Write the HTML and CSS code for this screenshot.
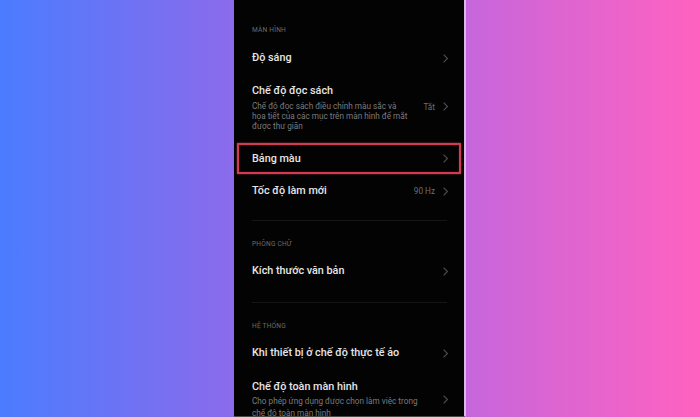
FILE: index.html
```html
<!DOCTYPE html>
<html lang="vi">
<head>
<meta charset="utf-8">
<title>Màn hình</title>
<link rel="stylesheet" href="styles.css">
</head>
<body>
<div class="stage">
  <div class="phone">
    <div class="section-title first">MÀN HÌNH</div>
    <div class="row h40">
      <div class="label">Độ sáng</div>
      <svg class="chev" viewBox="0 0 5 9"><polyline points="0.6,0.6 4.4,4.5 0.6,8.4"/></svg>
    </div>
    <div class="row tall">
      <div class="text">
        <div class="label">Chế độ đọc sách</div>
        <div class="sub">Chế độ đọc sách điều chỉnh màu sắc và họa tiết của các mục trên màn hình để mắt được thư giãn</div>
      </div>
      <div class="value">Tắt</div>
      <svg class="chev" viewBox="0 0 5 9"><polyline points="0.6,0.6 4.4,4.5 0.6,8.4"/></svg>
    </div>
    <div class="row h31 highlight">
      <div class="label">Bảng màu</div>
      <svg class="chev" viewBox="0 0 5 9"><polyline points="0.6,0.6 4.4,4.5 0.6,8.4"/></svg>
    </div>
    <div class="row h34">
      <div class="label">Tốc độ làm mới</div>
      <div class="value">90 Hz</div>
      <svg class="chev" viewBox="0 0 5 9"><polyline points="0.6,0.6 4.4,4.5 0.6,8.4"/></svg>
    </div>
    <div class="divider"></div>
    <div class="section-title">PHÔNG CHỮ</div>
    <div class="row h38">
      <div class="label">Kích thước văn bản</div>
      <svg class="chev" viewBox="0 0 5 9"><polyline points="0.6,0.6 4.4,4.5 0.6,8.4"/></svg>
    </div>
    <div class="divider"></div>
    <div class="section-title">HỆ THỐNG</div>
    <div class="row h38">
      <div class="label">Khi thiết bị ở chế độ thực tế ảo</div>
      <svg class="chev" viewBox="0 0 5 9"><polyline points="0.6,0.6 4.4,4.5 0.6,8.4"/></svg>
    </div>
    <div class="row last">
      <div class="text">
        <div class="label">Chế độ toàn màn hình</div>
        <div class="sub wide">Cho phép ứng dụng được chọn làm việc trong chế độ toàn màn hình</div>
      </div>
      <svg class="chev" viewBox="0 0 5 9"><polyline points="0.6,0.6 4.4,4.5 0.6,8.4"/></svg>
    </div>
  </div>
</div>
</body>
</html>
```
FILE: styles.css
```css
html, body {
  margin: 0;
  padding: 0;
}
body {
  width: 700px;
  height: 417px;
  overflow: hidden;
  font-family: Roboto, "Noto Sans", "Liberation Sans", sans-serif;
}
.stage {
  width: 700px;
  height: 417px;
  background: linear-gradient(to right, #4b7cff 0%, #8a6beb 33%, #c766dc 67%, #ff62c0 100%);
  display: flex;
}
.phone {
  margin-left: 234px;
  width: 230px;
  height: 416px;
  background: #030303;
  border-right: 2px solid #d9b8e6;
  border-bottom: 1px solid #4a4a4a;
  display: flex;
  flex-direction: column;
  overflow: hidden;
}
.section-title {
  height: 16px;
  line-height: 16px;
  font-size: 6.6px;
  color: #6c6c6c;
  padding-left: 18px;
  letter-spacing: 0.2px;
}
.section-title.first {
  margin-top: 22px;
}
.row {
  display: flex;
  align-items: center;
  margin: 0 3px;
  padding-left: 15px;
  padding-right: 13px;
  box-sizing: border-box;
  flex: none;
}
.h40 { height: 40px; }
.h31 { height: 31px; }
.h34 { height: 34px; }
.h38 { height: 38px; }
.tall {
  height: 65px;
  align-items: flex-start;
  padding-top: 6px;
}
.tall .value, .tall .chev {
  margin-top: 18px;
}
.last {
  align-items: flex-start;
  padding-top: 8px;
  height: 46px;
}
.last .chev {
  margin-top: 15px;
}
.label {
  font-size: 10.8px;
  font-weight: 500;
  color: #e6e6e6;
  line-height: 14px;
  white-space: nowrap;
}
.text {
  flex: 1;
  min-width: 0;
}
.row > .label {
  flex: 1;
}
.sub {
  font-size: 8.2px;
  color: #7b7b7b;
  line-height: 10px;
  margin-top: 3px;
  width: 158px;
}
.sub.wide {
  width: 172px;
  line-height: 12px;
  margin-top: 1px;
}
.value {
  font-size: 8.2px;
  color: #6f6f6f;
  margin-right: 8px;
}
.chev {
  width: 5px;
  height: 9px;
  flex: none;
  fill: none;
  stroke: #4e4e4e;
  stroke-width: 1.1;
}
.highlight {
  border: 2px solid #d23c52;
  padding-left: 13px;
  padding-right: 11px;
  box-shadow: 0 0 2px rgba(230, 70, 90, 0.6), inset 0 0 2px rgba(230, 70, 90, 0.4);
}
.divider {
  height: 1px;
  background: #151515;
  margin: 12px 17px 15px 18px;
  flex: none;
}
```
